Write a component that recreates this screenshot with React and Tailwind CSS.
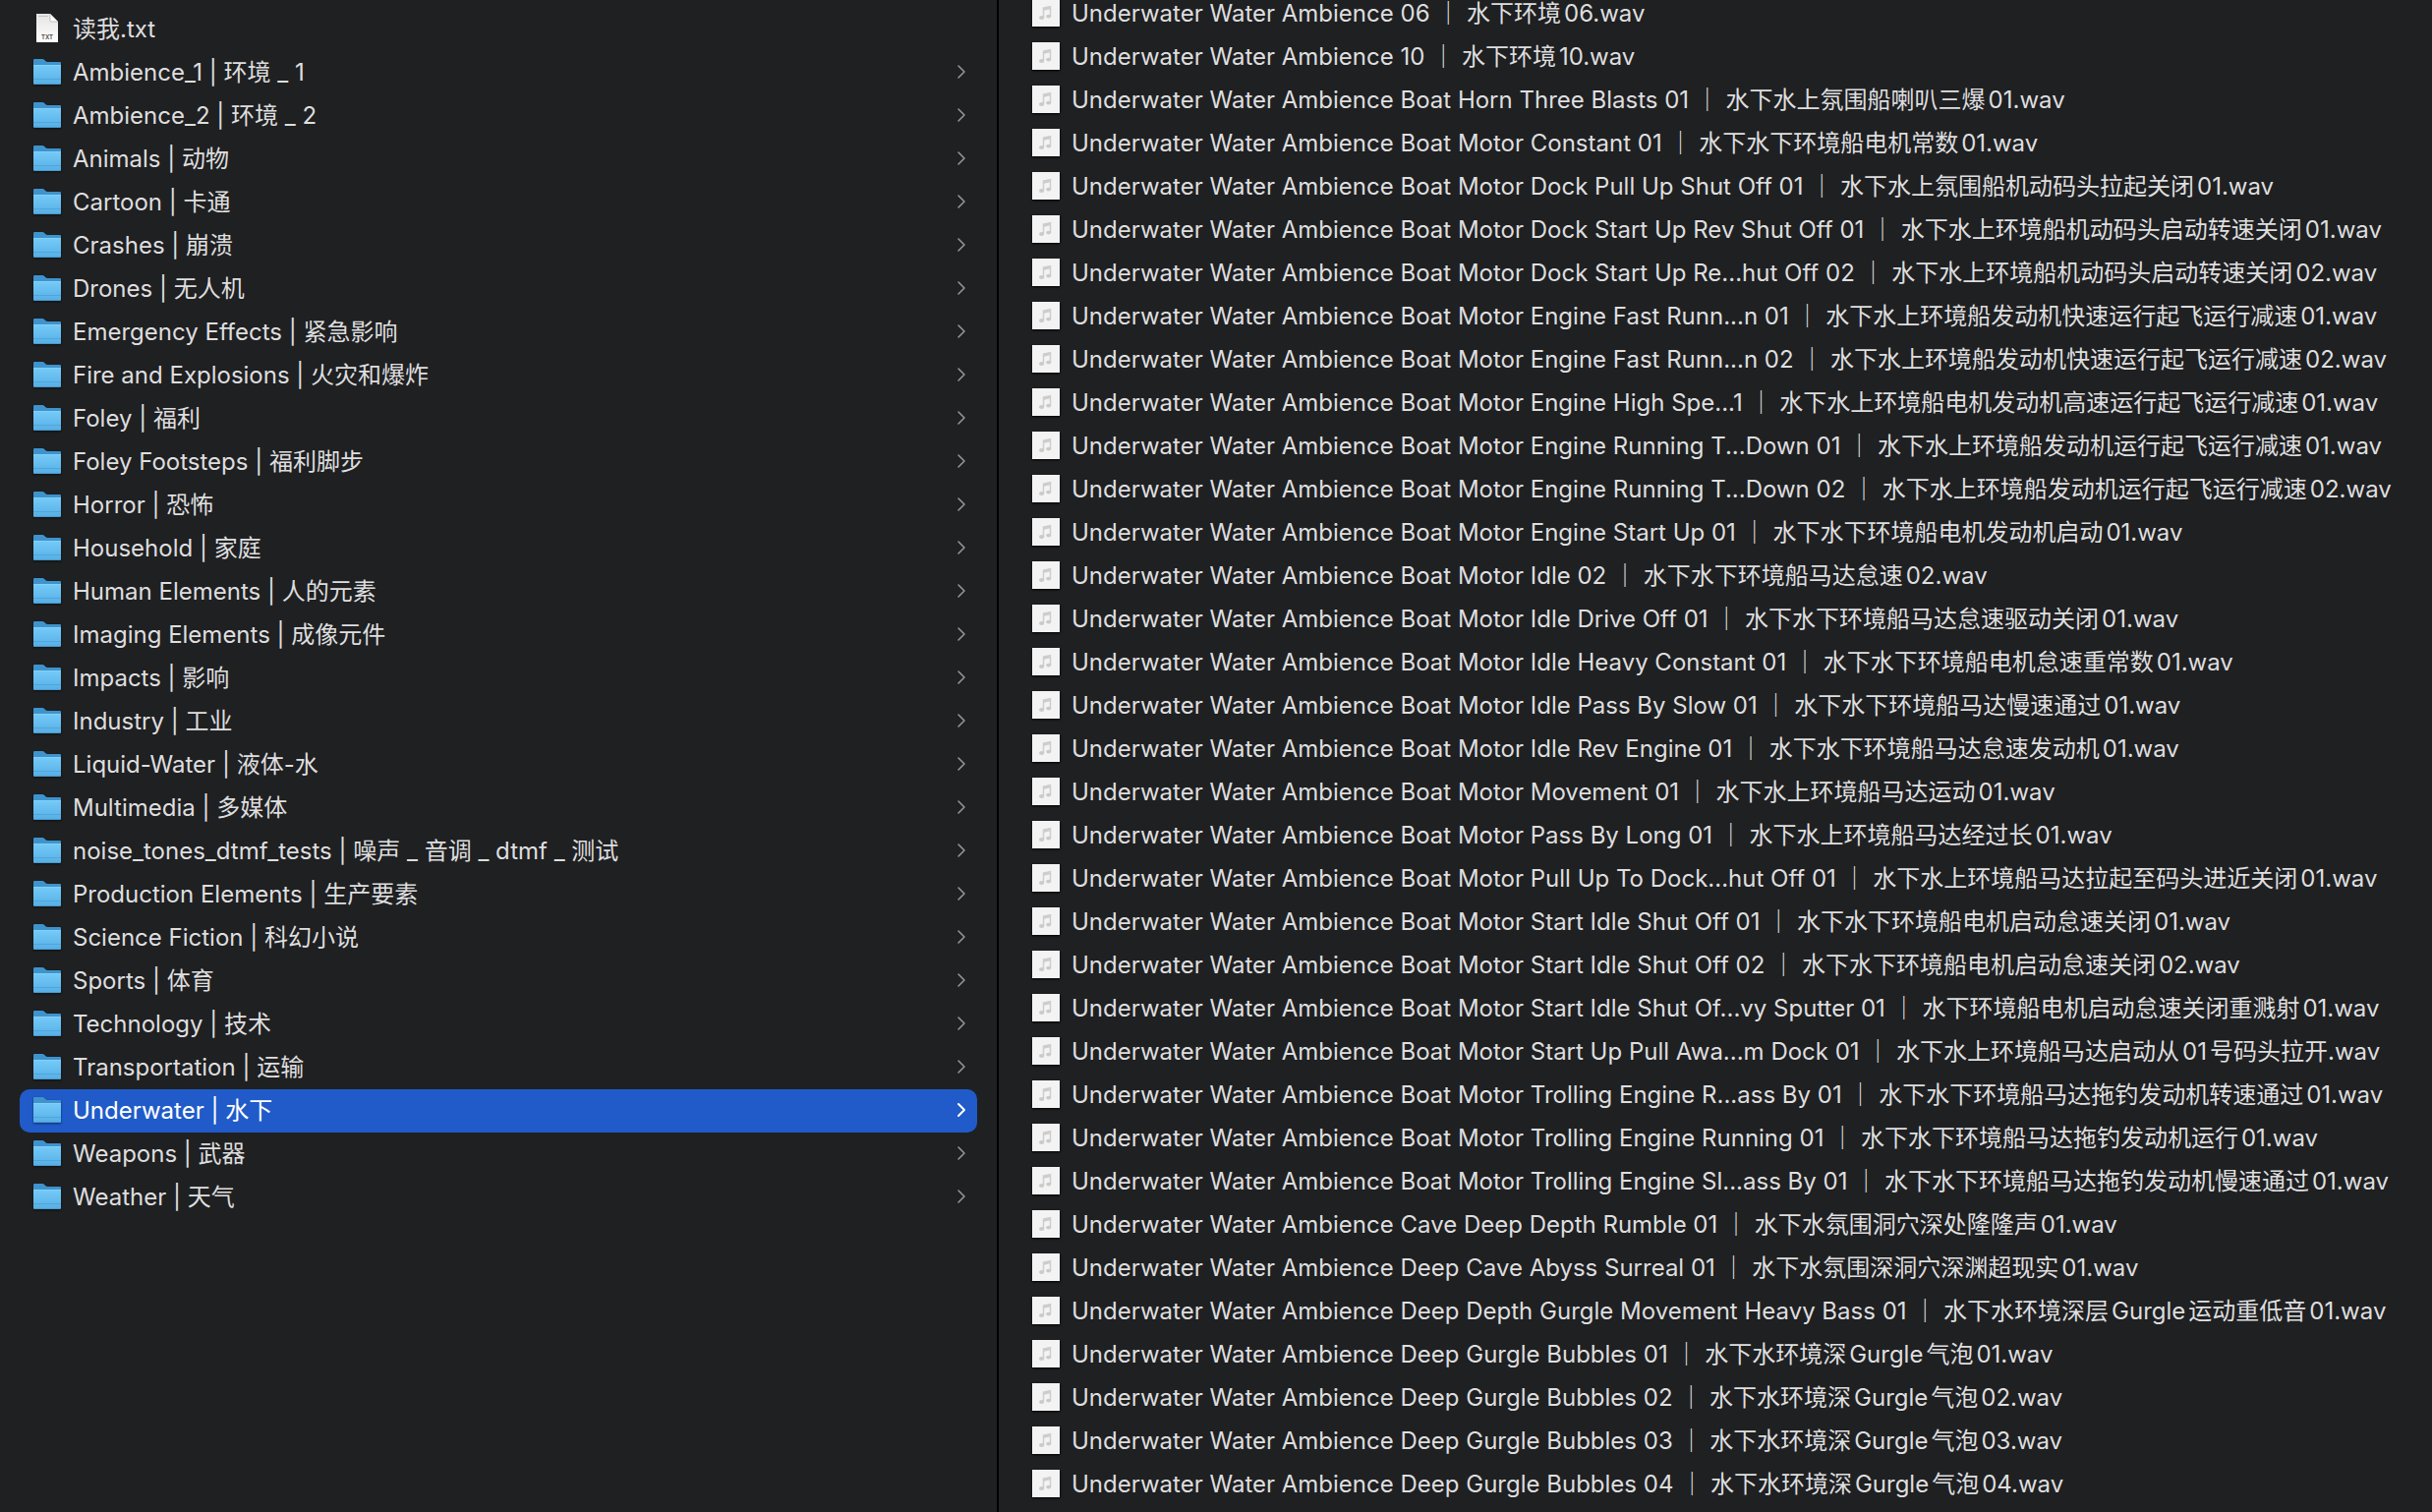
import { ChevronRight } from 'lucide-react';

const folders = [
  'Ambience_1 | 环境 _ 1',
  'Ambience_2 | 环境 _ 2',
  'Animals | 动物',
  'Cartoon | 卡通',
  'Crashes | 崩溃',
  'Drones | 无人机',
  'Emergency Effects | 紧急影响',
  'Fire and Explosions | 火灾和爆炸',
  'Foley | 福利',
  'Foley Footsteps | 福利脚步',
  'Horror | 恐怖',
  'Household | 家庭',
  'Human Elements | 人的元素',
  'Imaging Elements | 成像元件',
  'Impacts | 影响',
  'Industry | 工业',
  'Liquid-Water | 液体-水',
  'Multimedia | 多媒体',
  'noise_tones_dtmf_tests | 噪声 _ 音调 _ dtmf _ 测试',
  'Production Elements | 生产要素',
  'Science Fiction | 科幻小说',
  'Sports | 体育',
  'Technology | 技术',
  'Transportation | 运输',
  'Underwater | 水下',
  'Weapons | 武器',
  'Weather | 天气',
];

const selected = 'Underwater | 水下';

const sounds = [
  'Underwater Water Ambience 06 ｜ 水下环境06.wav',
  'Underwater Water Ambience 10 ｜ 水下环境10.wav',
  'Underwater Water Ambience Boat Horn Three Blasts 01 ｜ 水下水上氛围船喇叭三爆01.wav',
  'Underwater Water Ambience Boat Motor Constant 01 ｜ 水下水下环境船电机常数01.wav',
  'Underwater Water Ambience Boat Motor Dock Pull Up Shut Off 01 ｜ 水下水上氛围船机动码头拉起关闭01.wav',
  'Underwater Water Ambience Boat Motor Dock Start Up Rev Shut Off 01 ｜ 水下水上环境船机动码头启动转速关闭01.wav',
  'Underwater Water Ambience Boat Motor Dock Start Up Re...hut Off 02 ｜ 水下水上环境船机动码头启动转速关闭02.wav',
  'Underwater Water Ambience Boat Motor Engine Fast Runn...n 01 ｜ 水下水上环境船发动机快速运行起飞运行减速01.wav',
  'Underwater Water Ambience Boat Motor Engine Fast Runn...n 02 ｜ 水下水上环境船发动机快速运行起飞运行减速02.wav',
  'Underwater Water Ambience Boat Motor Engine High Spe...1 ｜ 水下水上环境船电机发动机高速运行起飞运行减速01.wav',
  'Underwater Water Ambience Boat Motor Engine Running T...Down 01 ｜ 水下水上环境船发动机运行起飞运行减速01.wav',
  'Underwater Water Ambience Boat Motor Engine Running T...Down 02 ｜ 水下水上环境船发动机运行起飞运行减速02.wav',
  'Underwater Water Ambience Boat Motor Engine Start Up 01 ｜ 水下水下环境船电机发动机启动01.wav',
  'Underwater Water Ambience Boat Motor Idle 02 ｜ 水下水下环境船马达怠速02.wav',
  'Underwater Water Ambience Boat Motor Idle Drive Off 01 ｜ 水下水下环境船马达怠速驱动关闭01.wav',
  'Underwater Water Ambience Boat Motor Idle Heavy Constant 01 ｜ 水下水下环境船电机怠速重常数01.wav',
  'Underwater Water Ambience Boat Motor Idle Pass By Slow 01 ｜ 水下水下环境船马达慢速通过01.wav',
  'Underwater Water Ambience Boat Motor Idle Rev Engine 01 ｜ 水下水下环境船马达怠速发动机01.wav',
  'Underwater Water Ambience Boat Motor Movement 01 ｜ 水下水上环境船马达运动01.wav',
  'Underwater Water Ambience Boat Motor Pass By Long 01 ｜ 水下水上环境船马达经过长01.wav',
  'Underwater Water Ambience Boat Motor Pull Up To Dock...hut Off 01 ｜ 水下水上环境船马达拉起至码头进近关闭01.wav',
  'Underwater Water Ambience Boat Motor Start Idle Shut Off 01 ｜ 水下水下环境船电机启动怠速关闭01.wav',
  'Underwater Water Ambience Boat Motor Start Idle Shut Off 02 ｜ 水下水下环境船电机启动怠速关闭02.wav',
  'Underwater Water Ambience Boat Motor Start Idle Shut Of...vy Sputter 01 ｜ 水下环境船电机启动怠速关闭重溅射01.wav',
  'Underwater Water Ambience Boat Motor Start Up Pull Awa...m Dock 01 ｜ 水下水上环境船马达启动从01号码头拉开.wav',
  'Underwater Water Ambience Boat Motor Trolling Engine R...ass By 01 ｜ 水下水下环境船马达拖钓发动机转速通过01.wav',
  'Underwater Water Ambience Boat Motor Trolling Engine Running 01 ｜ 水下水下环境船马达拖钓发动机运行01.wav',
  'Underwater Water Ambience Boat Motor Trolling Engine Sl...ass By 01 ｜ 水下水下环境船马达拖钓发动机慢速通过01.wav',
  'Underwater Water Ambience Cave Deep Depth Rumble 01 ｜ 水下水氛围洞穴深处隆隆声01.wav',
  'Underwater Water Ambience Deep Cave Abyss Surreal 01 ｜ 水下水氛围深洞穴深渊超现实01.wav',
  'Underwater Water Ambience Deep Depth Gurgle Movement Heavy Bass 01 ｜ 水下水环境深层Gurgle运动重低音01.wav',
  'Underwater Water Ambience Deep Gurgle Bubbles 01 ｜ 水下水环境深Gurgle气泡01.wav',
  'Underwater Water Ambience Deep Gurgle Bubbles 02 ｜ 水下水环境深Gurgle气泡02.wav',
  'Underwater Water Ambience Deep Gurgle Bubbles 03 ｜ 水下水环境深Gurgle气泡03.wav',
  'Underwater Water Ambience Deep Gurgle Bubbles 04 ｜ 水下水环境深Gurgle气泡04.wav',
];

const FolderIcon = () => (
  <svg viewBox="0 0 28 26" className="mb-0.5 h-[26px] w-7 shrink-0 drop-shadow-[0_1px_1px_rgba(0,0,0,0.5)]" aria-hidden="true">
    <path d="M0 1.2Q0 0 1.2 0H9.2Q10.2 0 11 0.8L12.2 2Q13.2 3 14.6 3H27Q28 3 28 4V9H0Z" fill="#3f93cd" />
    <path d="M0 6H28V24.8Q28 26 26.8 26H1.2Q0 26 0 24.8Z" fill="url(#folderFront)" />
    <path d="M0 6.5H28" stroke="#82d0f6" />
    <path d="M0 20.5H28" stroke="#4fa6dc" />
    <path d="M1 25.5H27" stroke="#479bd0" />
  </svg>
);

const TextFileIcon = () => (
  <svg viewBox="0 0 28 32" className="mb-0.5 h-8 w-7 shrink-0" aria-hidden="true">
    <path d="M3 1H17L25 9V30H3Z" fill="url(#paper)" />
    <path d="M17 1L25 9H18Q17 9 17 8Z" fill="#fff" stroke="#a9a9a9" strokeWidth="0.7" />
    <path d="M5 3.5H15" stroke="#c4c4c4" />
    <text x="14" y="27" textAnchor="middle" fontSize="6" fontWeight="600" fontFamily="Inter, sans-serif" fill="#444">TXT</text>
  </svg>
);

const AudioIcon = () => (
  <svg viewBox="0 0 28 28" className="mb-0.5 size-7 shrink-0 shadow-[0_1px_2px_#000]" aria-hidden="true">
    <rect width="28" height="28" fill="#f3f3f3" />
    <path d="M11.5 19V9L18.5 7.6V17.5" fill="none" stroke="#cdcdcd" strokeWidth="1.5" />
    <path d="M11.5 10.4L18.5 9" stroke="#cdcdcd" strokeWidth="2.5" />
    <ellipse cx="9.6" cy="19" rx="2.6" ry="1.9" fill="#cacaca" />
    <ellipse cx="16.7" cy="17.6" rx="2.5" ry="1.9" fill="#cacaca" />
  </svg>
);

const FolderRow = ({ name, active }) => (
  <li>
    <button
      type="button"
      aria-current={active}
      className={`flex h-11 w-full items-center gap-3 rounded-[10px] pr-1 pl-3.5 text-left ${active ? 'bg-[#205bc9] text-white' : ''}`}
    >
      <FolderIcon />
      <span className="grow truncate">{name}</span>
      <ChevronRight className={`mb-0.5 size-6 shrink-0 ${active ? 'text-white' : 'text-[#98989a]'}`} strokeWidth={active ? 2 : 1.5} />
    </button>
  </li>
);

export default function App() {
  return (
    <main className="flex h-screen overflow-hidden bg-[#1f2022] font-['Inter','Noto_Sans_CJK_SC',sans-serif] text-[24px] leading-8 text-[#dededf] [text-autospace:normal]">
      {/* shared gradients for the row icons */}
      <svg className="absolute size-0" aria-hidden="true">
        <defs>
          <linearGradient id="folderFront" x1="0" y1="0" x2="0" y2="1">
            <stop offset="0" stopColor="#75cbf8" />
            <stop offset="1" stopColor="#56aee5" />
          </linearGradient>
          <linearGradient id="paper" x1="0" y1="0" x2="0" y2="1">
            <stop offset="0" stopColor="#e4e4e4" />
            <stop offset="1" stopColor="#ffffff" />
          </linearGradient>
        </defs>
      </svg>

      <nav className="w-254 shrink-0 border-r-2 border-black px-5 pt-2">
        <ul>
          <li>
            <button type="button" className="flex h-11 w-full items-center gap-3 pl-3.5 text-left">
              <TextFileIcon />
              <span>读我.txt</span>
            </button>
          </li>
          {folders.map(name => (
            <FolderRow key={name} name={name} active={name === selected} />
          ))}
        </ul>
      </nav>

      <section className="min-w-0 grow overflow-hidden">
        {/* the list is scrolled a little past its first row */}
        <ul className="-mt-2 pl-[34px]">
          {sounds.map(name => (
            <li key={name}>
              <button type="button" className="flex h-11 w-full items-center gap-3 text-left whitespace-nowrap">
                <AudioIcon />
                <span>{name}</span>
              </button>
            </li>
          ))}
        </ul>
      </section>
    </main>
  );
}
